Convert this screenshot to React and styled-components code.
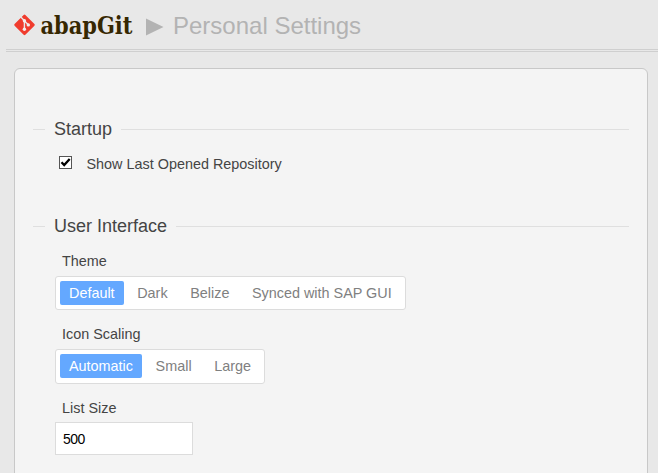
import React, { useState } from "react";
import styled, { createGlobalStyle } from "styled-components";

const GlobalStyle = createGlobalStyle`
  * { box-sizing: border-box; }
  html, body { margin: 0; height: 100%; overflow: hidden; }
  body {
    background: #e8e8e8;
    color: #444;
    font-family: "Liberation Sans", Arial, sans-serif;
    font-size: 14.4px;
  }
`;

const Page = styled.div`
  height: 473px;
  overflow: hidden;
`;

const Header = styled.header`
  display: flex;
  align-items: flex-start;
  height: 52px;
  margin-left: 6px;
  padding: 9px 0 0 7px;
  border-bottom: 3px double #cfcfcf;
`;

const Logo = styled.svg`
  display: block;
  flex: none;
  width: 124px;
  height: 36px;
  overflow: visible;
`;

const Wordmark = styled.text`
  font-family: "DejaVu Serif", serif;
  font-size: 24px;
  font-weight: bold;
  fill: #362701;
`;

const Arrow = styled.svg`
  display: block;
  flex: none;
  width: 18px;
  height: 18px;
  margin: 9px 9px 0 9px;
`;

const Title = styled.h1`
  margin: 3px 0 0;
  font-size: 24px;
  line-height: 28px;
  font-weight: normal;
  color: #b3b3b3;
`;

const Panel = styled.form`
  width: 634px;
  height: 480px;
  margin: 16px 0 0 14px;
  padding: 50px 18px 0;
  border: 1px solid #c8c8c8;
  border-radius: 6px;
  background: #f4f4f4;
`;

const Section = styled.section`
  height: 97px;
`;

const Legend = styled.h2`
  display: flex;
  align-items: center;
  gap: 9px;
  margin: 0;
  height: 20px;
  font-size: 18px;
  line-height: 20px;
  font-weight: normal;

  &::before, &::after {
    content: "";
    height: 1px;
    background: #dfdfdf;
  }
  &::before { width: 12px; }
  &::after { flex: 1; }
`;

const CheckRow = styled.label`
  display: flex;
  align-items: center;
  gap: 14.5px;
  height: 18px;
  margin: 16px 0 0 26px;
`;

const CheckBox = styled.button`
  width: 13px;
  height: 13px;
  margin-top: -3px;
  padding: 0;
  border: 1px solid #555;
  background: #fff;

  svg { display: block; }
`;

const Field = styled.div`
  padding-left: 22px;
  margin-top: ${(p) => p.$gap}px;
`;

const Label = styled.div`
  height: 18px;
  margin: 0 0 ${(p) => p.$space ?? 6}px 7px;
  line-height: 18px;
`;

const Segments = styled.div`
  display: inline-flex;
  gap: 4.6px;
  height: ${(p) => p.$height}px;
  padding: 4px;
  border: 1px solid #dcdcdc;
  border-radius: 3px;
  background: #fff;
  vertical-align: top;
`;

const Segment = styled.button`
  height: 24px;
  padding: 0 9px;
  border: 0;
  border-radius: 2px;
  background: ${(p) => (p.$active ? "#64a8ff" : "transparent")};
  color: ${(p) => (p.$active ? "#fff" : "#808080")};
  font: inherit;
  line-height: 24px;
  white-space: nowrap;
`;

const Input = styled.input`
  display: block;
  width: 138px;
  height: 33px;
  padding: 0 7px;
  border: 1px solid #dcdcdc;
  background: #fff;
  color: #000;
  font: 14px "Liberation Sans", Arial, sans-serif;
  letter-spacing: -0.5px;
`;

function Choice({ label, options, gap, height = 34 }) {
  const [value, setValue] = useState(options[0]);
  return (
    <Field $gap={gap}>
      <Label>{label}</Label>
      <Segments $height={height}>
        {options.map((o) => (
          <Segment key={o} type="button" $active={o === value} onClick={() => setValue(o)}>
            {o}
          </Segment>
        ))}
      </Segments>
    </Field>
  );
}

export default function App() {
  const [checked, setChecked] = useState(true);
  return (
    <Page>
      <GlobalStyle />
      <Header>
        <Logo viewBox="0 0 124 36" role="img" aria-label="abapGit">
          <rect x="3.9" y="8.3" width="15.2" height="15.2" rx="1.2" fill="#f03c2e" transform="rotate(45 11.5 15.9)" />
          <path d="M7.4 7.6 11.4 11.8V20M11.4 11.8 15.2 15.8" stroke="#e8e8e8" strokeWidth="1.4" fill="none" />
          <g fill="#f4eeee">
            <circle cx="11.4" cy="11.8" r="1.7" />
            <circle cx="11.4" cy="20.2" r="1.7" />
            <circle cx="15.3" cy="15.9" r="1.7" />
          </g>
          <Wordmark x="27.5" y="25" textLength="92" lengthAdjust="spacingAndGlyphs">abapGit</Wordmark>
        </Logo>
        <Arrow viewBox="0 0 18 18">
          <path d="M0 0.5 17.5 9 0 17.5Z" fill="#b3b3b3" />
        </Arrow>
        <Title>Personal Settings</Title>
      </Header>
      <Panel>
        <Section>
          <Legend>Startup</Legend>
          <CheckRow>
            <CheckBox type="button" role="checkbox" aria-checked={checked} onClick={() => setChecked(!checked)}>
              {checked && (
                <svg width="11" height="11" viewBox="0 0 11 11">
                  <path d="M1.5 5.2 4.2 8.1 9.7 1.9" fill="none" stroke="#000" strokeWidth="2.3" />
                </svg>
              )}
            </CheckBox>
            Show Last Opened Repository
          </CheckRow>
        </Section>
        <Legend>User Interface</Legend>
        <Choice label="Theme" gap={16} options={["Default", "Dark", "Belize", "Synced with SAP GUI"]} />
        <Choice label="Icon Scaling" gap={15} height={35} options={["Automatic", "Small", "Large"]} />
        <Field $gap={15}>
          <Label $space={5}>List Size</Label>
          <Input defaultValue="500" />
        </Field>
      </Panel>
    </Page>
  );
}
